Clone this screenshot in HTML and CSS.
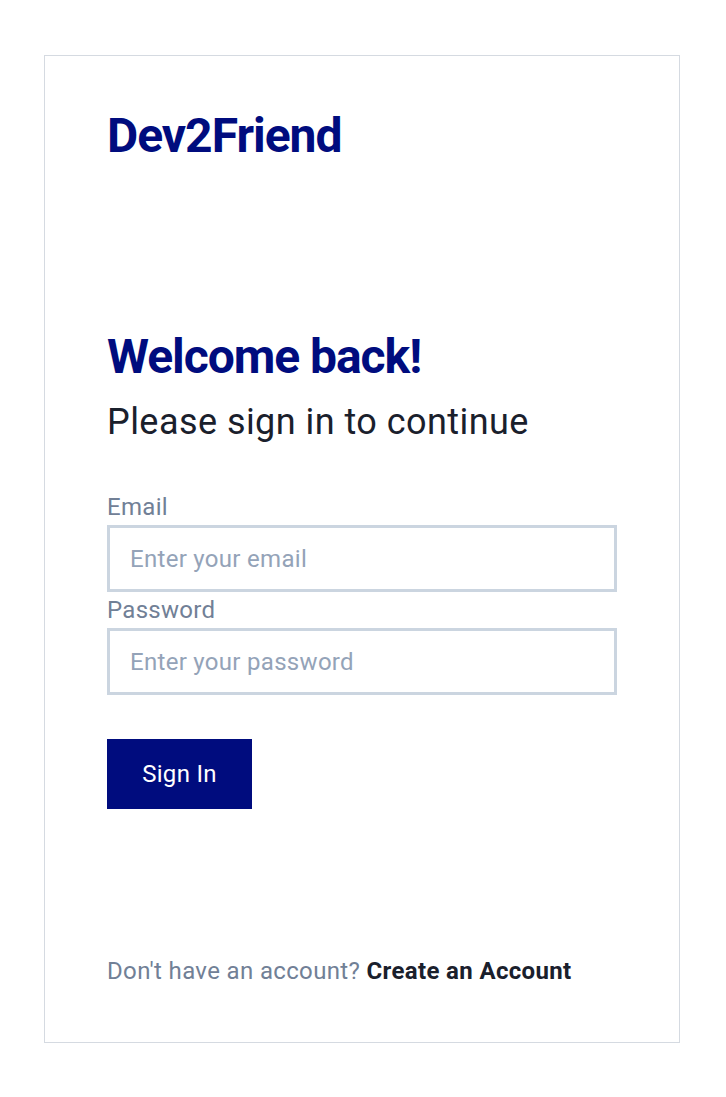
FILE: index.html
```html
<!DOCTYPE html>
<html lang="en">
<head>
<meta charset="utf-8">
<title>Dev2Friend - Sign In</title>
<link rel="stylesheet" href="styles.css">
</head>
<body>
<main class="card">
  <div class="logo">Dev2Friend</div>
  <h1 class="title">Welcome back!</h1>
  <p class="subtitle">Please sign in to continue</p>
  <form class="form">
    <label class="label" for="email">Email</label>
    <input class="input" id="email" type="email" placeholder="Enter your email">
    <label class="label" for="password">Password</label>
    <input class="input" id="password" type="password" placeholder="Enter your password">
    <div class="actions">
      <button class="btn" type="button">Sign In</button>
    </div>
  </form>
  <p class="footer">Don't have an account? <a class="link" href="#">Create an Account</a></p>
</main>
</body>
</html>
```

FILE: styles.css
```css
* { box-sizing: border-box; }
html, body { margin: 0; padding: 0; background: #fff; }
body {
  font-family: Roboto, "Liberation Sans", sans-serif;
  padding-top: 55px;
}
.card {
  width: 636px;
  height: 988px;
  margin-left: 44px;
  border: 1px solid #d5dae1;
  padding: 56px 62px 0 62px;
  display: flex;
  flex-direction: column;
}
.logo {
  font-size: 48px;
  line-height: 48px;
  font-weight: 700;
  letter-spacing: -1px;
  color: #000c7e;
}
.title {
  margin: 173px 0 0 0;
  font-size: 48px;
  line-height: 48px;
  font-weight: 700;
  letter-spacing: -1.05px;
  color: #000c7e;
}
.subtitle {
  margin: 21px 0 0 0;
  font-size: 36px;
  line-height: 40px;
  letter-spacing: 0.45px;
  color: #1a202c;
}
.form {
  margin-top: 47px;
  display: flex;
  flex-direction: column;
}
.label {
  font-size: 24px;
  line-height: 36px;
  letter-spacing: 0.3px;
  color: #718096;
}
.input {
  width: 510px;
  height: 67px;
  border: 3px solid #cbd5e0;
  border-radius: 0;
  padding: 0 20px;
  font-family: inherit;
  font-size: 24px;
  letter-spacing: 0.3px;
  color: #1a202c;
  background: #fff;
  outline: none;
}
.input::placeholder { color: #94a3b8; opacity: 1; }
.actions { margin-top: 44px; }
.btn {
  background: #000c7e;
  color: #fff;
  border: 0;
  border-radius: 0;
  font-family: inherit;
  font-size: 24px;
  line-height: 36px;
  letter-spacing: 0.3px;
  padding: 17px 0;
  width: 145px;
  height: 70px;
  cursor: pointer;
}
.footer {
  margin: 144px 0 0 0;
  font-size: 24px;
  line-height: 36px;
  letter-spacing: 0.35px;
  color: #718096;
}
.link {
  color: #1a202c;
  font-weight: 700;
  text-decoration: none;
}
```
